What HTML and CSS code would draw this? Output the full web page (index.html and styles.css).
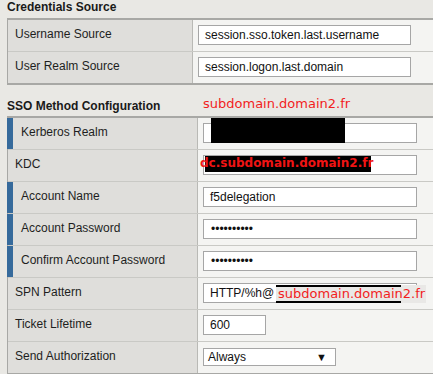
FILE: index.html
```html
<!DOCTYPE html>
<html>
<head>
<meta charset="utf-8">
<link rel="stylesheet" href="styles.css">
</head>
<body>
<div class="section-title first">Credentials Source</div>
<div class="form-table t1">
  <div class="row">
    <div class="label">Username Source</div>
    <div class="value"><div class="field wide">session.sso.token.last.username</div></div>
  </div>
  <div class="row">
    <div class="label">User Realm Source</div>
    <div class="value"><div class="field wide">session.logon.last.domain</div></div>
  </div>
</div>

<div class="section-title second">SSO Method Configuration<span class="red-note">subdomain.domain2.fr</span></div>
<div class="form-table t2">
  <div class="row">
    <div class="label req">Kerberos Realm</div>
    <div class="value"><div class="field wide"></div><span class="redact-krb"></span></div>
  </div>
  <div class="row">
    <div class="label">KDC</div>
    <div class="value"><div class="field wide"></div><span class="redact-kdc"></span><span class="kdc-text">dc.subdomain.domain2.fr</span></div>
  </div>
  <div class="row">
    <div class="label req">Account Name</div>
    <div class="value"><div class="field wide">f5delegation</div></div>
  </div>
  <div class="row">
    <div class="label req">Account Password</div>
    <div class="value"><div class="field wide dots">••••••••••</div></div>
  </div>
  <div class="row">
    <div class="label req">Confirm Account Password</div>
    <div class="value"><div class="field wide dots">••••••••••</div></div>
  </div>
  <div class="row">
    <div class="label">SPN Pattern</div>
    <div class="value"><div class="field wide">HTTP/%h@</div><span class="spn-over"><span class="spn-lines"></span><span class="spn-text">subdomain.domain2.fr</span></span></div>
  </div>
  <div class="row">
    <div class="label">Ticket Lifetime</div>
    <div class="value"><div class="field short">600</div></div>
  </div>
  <div class="row">
    <div class="label">Send Authorization</div>
    <div class="value"><div class="select"><span>Always</span><span class="arrow">▼</span></div></div>
  </div>
</div>
</body>
</html>
```

FILE: styles.css
```css
html, body {
  margin: 0;
  padding: 0;
  background: #e9e8e4;
  font-family: "Liberation Sans", Arial, sans-serif;
  font-size: 12px;
  color: #1e1e1e;
}
.section-title {
  font-weight: bold;
  padding-left: 7px;
  position: relative;
  color: #1a1a1a;
}
.section-title.first {
  height: 18px;
  line-height: 14px;
}
.section-title.second {
  height: 31px;
  line-height: 14px;
  box-sizing: border-box;
  padding-top: 14px;
}
.red-note {
  position: absolute;
  left: 203px;
  top: 11px;
  font-family: "DejaVu Sans", Verdana, sans-serif;
  font-weight: normal;
  font-size: 13px;
  line-height: 16px;
  color: #f21d1d;
}
.form-table {
  margin-left: 7px;
  border-top: 2px solid #a8a8a5;
  border-bottom: 2px solid #a8a8a5;
  border-left: 1px solid #a8a8a5;
}
.row {
  display: grid;
  height: 31px;
}
.t1 .row { grid-template-columns: 185px 1fr; }
.t2 .row { grid-template-columns: 190px 1fr; }
.row + .row { border-top: 1px solid #c9c9c5; }
.label {
  background: #dfdedb;
  border-right: 1px solid #b9b9b5;
  display: flex;
  align-items: center;
  padding-left: 7px;
  padding-bottom: 3px;
}
.label.req {
  border-left: 6px solid #366a9b;
  margin-left: -1px;
  padding-left: 8px;
}
.value {
  background: #f4f4f2;
  display: flex;
  align-items: center;
  padding-left: 5px;
  padding-bottom: 2px;
  position: relative;
}
.field {
  box-sizing: border-box;
  height: 20px;
  background: #fff;
  border: 1px solid #a6a6a6;
  padding-left: 6px;
  line-height: 18px;
  color: #111;
  white-space: nowrap;
  overflow: hidden;
}
.t1 .field.wide { width: 213px; }
.t2 .field.wide { width: 214px; }
.field.short { width: 63px; }
.field.dots { font-size: 12px; padding-left: 7px; }
.select {
  box-sizing: border-box;
  width: 133px;
  height: 18px;
  background: #fff;
  border: 1px solid #a6a6a6;
  display: flex;
  justify-content: space-between;
  align-items: center;
  padding: 0 8px 0 4px;
  color: #111;
}
.select .arrow { font-size: 11px; }
.redact-krb {
  position: absolute;
  left: 13px;
  top: 0;
  width: 134px;
  height: 25px;
  background: #000;
}
.redact-kdc {
  position: absolute;
  left: 7px;
  top: 6px;
  width: 166px;
  height: 16px;
  background: #000;
}
.kdc-text {
  position: absolute;
  left: 2px;
  top: 5px;
  font-family: "DejaVu Sans", Verdana, sans-serif;
  font-weight: bold;
  font-size: 12px;
  line-height: 16px;
  color: #f01414;
}
.spn-over {
  position: absolute;
  left: 78px;
  top: 7px;
  width: 150px;
  height: 18px;
  background: #e9e8e6;
}
.spn-lines {
  position: absolute;
  left: 0;
  top: 0;
  width: 125px;
  height: 14px;
  border-top: 2px solid #000;
  border-bottom: 2px solid #000;
}
.spn-text {
  position: absolute;
  left: 2px;
  top: 0;
  font-family: "DejaVu Sans", Verdana, sans-serif;
  font-size: 13px;
  line-height: 18px;
  color: #f21d1d;
}
```
